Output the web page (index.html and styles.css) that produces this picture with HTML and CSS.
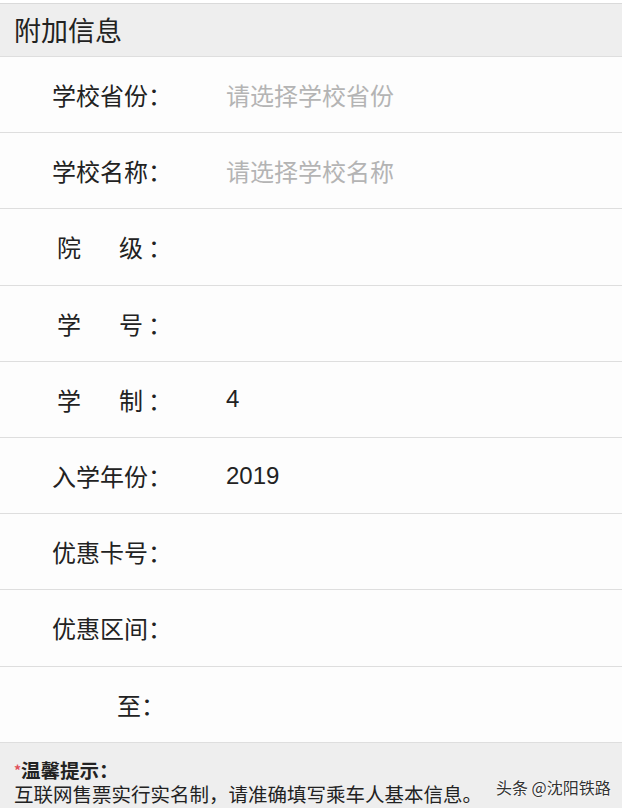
FILE: index.html
```html
<!DOCTYPE html>
<html lang="zh-CN">

<head>
    <meta charset="UTF-8">
    <meta name="viewport" content="width=device-width, initial-scale=1.0">
    <title>附加信息</title>
    <link rel="stylesheet" href="styles.css">
</head>

<body>
    <div class="panel">
        <h2 class="panel-title">附加信息</h2>

        <div class="row">
            <span class="label"><span class="name">学校省份</span>：</span>
            <span class="value placeholder">请选择学校省份</span>
        </div>
        <div class="row">
            <span class="label"><span class="name">学校名称</span>：</span>
            <span class="value placeholder">请选择学校名称</span>
        </div>
        <div class="row">
            <span class="label"><span class="name spread">院级</span>：</span>
            <span class="value"></span>
        </div>
        <div class="row">
            <span class="label"><span class="name spread">学号</span>：</span>
            <span class="value"></span>
        </div>
        <div class="row">
            <span class="label"><span class="name spread">学制</span>：</span>
            <span class="value">4</span>
        </div>
        <div class="row">
            <span class="label"><span class="name">入学年份</span>：</span>
            <span class="value">2019</span>
        </div>
        <div class="row">
            <span class="label"><span class="name">优惠卡号</span>：</span>
            <span class="value"></span>
        </div>
        <div class="row">
            <span class="label"><span class="name">优惠区间</span>：</span>
            <span class="value"></span>
        </div>
        <div class="row">
            <span class="label"><span class="name short">至</span>：</span>
            <span class="value"></span>
        </div>

        <div class="tips">
            <div class="tips-title"><span class="star">*</span>温馨提示：</div>
            <div class="tips-text">互联网售票实行实名制，请准确填写乘车人基本信息。</div>
            <span class="watermark">头条 @沈阳铁路</span>
        </div>
    </div>
</body>

</html>
```

FILE: styles.css
```css
body {
    margin: 0;
    font-family: "Noto Sans CJK SC", "Liberation Sans", sans-serif;
    color: #222;
    background-color: #fff;
}
.panel {
    padding-top: 3px;
}
.panel-title {
    margin: 0;
    height: 52px;
    line-height: 52px;
    padding-left: 14px;
    font-size: 27px;
    font-weight: normal;
    background-color: #eeeeee;
    border-top: 1px solid #dadada;
    border-bottom: 1px solid #dedede;
}
.row {
    display: flex;
    align-items: center;
    height: 75.2px;
    padding-left: 52px;
    border-bottom: 1px solid #dedede;
    background-color: #fdfdfd;
    font-size: 24px;
}
.label {
    display: flex;
    width: 174px;
    flex-shrink: 0;
}
.name {
    width: 96px;
    text-align: right;
}
.name.spread {
    padding: 0 5px;
    width: 86px;
    text-align: justify;
    text-align-last: justify;
}
.name.short {
    width: 89px;
}
.value {
    font-family: "Liberation Sans", "Noto Sans CJK SC", sans-serif;
}
.placeholder {
    color: #b4b4b4;
}
.tips {
    position: relative;
    height: 65px;
    padding: 15px 0 0 14px;
    box-sizing: border-box;
    background-color: #eeeeee;
    font-size: 19.5px;
    line-height: 24px;
}
.tips-title {
    font-weight: bold;
}
.star {
    color: #e0505a;
    font-size: 14px;
    vertical-align: top;
}
.watermark {
    position: absolute;
    left: 496px;
    top: 34px;
    font-size: 16px;
    line-height: 20px;
    color: #333;
    text-shadow: 0 0 2px #fff, 0 0 2px #fff;
}
```
